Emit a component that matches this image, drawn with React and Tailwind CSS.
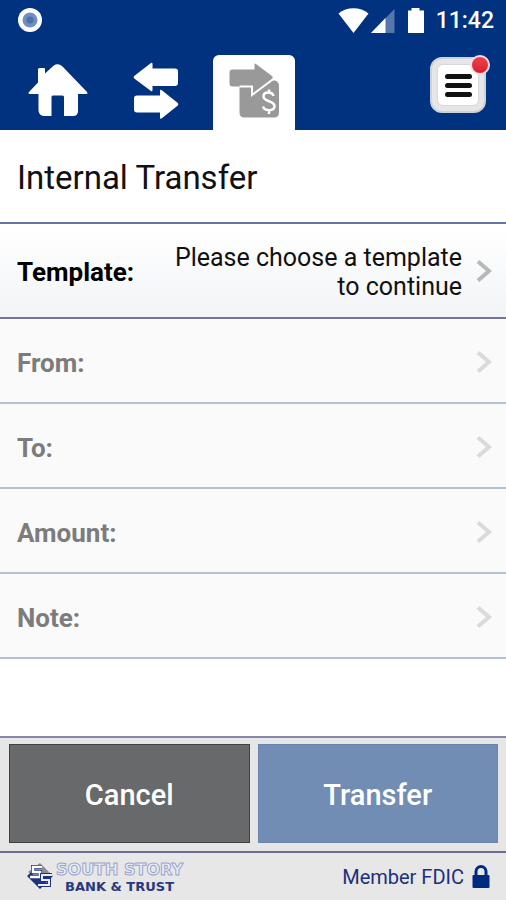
import React from "react";

function StatusBar() {
  return (
    <div className="flex h-10 items-center justify-between pr-3 pl-4">
      <svg className="h-7 w-7" viewBox="0 0 28 28" aria-hidden="true">
        <circle cx="14" cy="14" r="12" fill="#fff" />
        <circle cx="14" cy="14" r="7.500" fill="#6f8fc0" />
        <circle cx="14" cy="14" r="3.500" fill="#4a70ad" />
      </svg>
      <div className="flex items-center">
        <svg className="h-[26px] w-[94px]" viewBox="0 0 94 26" aria-hidden="true">
          <path d="M0.500 6.500C8.500-0.500 22.500-0.500 30.500 6.500L15.500 26Z" fill="#fff" />
          <path d="M56.500 2V26H33Z" fill="#5577ab" />
          <path d="M47.500 11V26H33Z" fill="#fff" />
          <path d="M73.500 1h8v2.500H86V26H70V3.500h3.500Z" fill="#fff" />
        </svg>
        <span className="ml-1 text-[23px] leading-none font-medium">11:42</span>
      </div>
    </div>
  );
}

function HomeIcon() {
  return (
    <svg className="h-[54px] w-[60px]" viewBox="0 0 60 54" aria-hidden="true">
      <path
        d="M10 5.500Q10 4 11.500 4H16Q17 4 17 5V9.500L25.500 1.800Q30 -1.500 34.500 2.500L59 28Q60.500 30 58 30H50V47Q50 52 45 52H36V33Q36 31.500 34.500 31.500H25Q23.500 31.500 23.500 33V52H16Q10.500 51.500 10.500 46V30H2Q-0.500 30 1 28L10 18.500Z"
        fill="#fff"
      />
    </svg>
  );
}

function ArrowsIcon() {
  return (
    <svg className="h-[58px] w-[46px]" viewBox="0 0 46 58" aria-hidden="true">
      <path
        d="M1.200 14L18 1Q19.500 0 19.500 2V6.500H42Q45 6.500 45 9V21Q45 24 42 24H19.500V28Q19.500 30 18 29L1.200 16.500Q0 15.300 1.200 14Z"
        fill="#fff"
      />
      <path
        d="M44.800 41L28.500 28Q27 27 27 29V33.500H4Q1 33.500 1 36.500V47.500Q1 50.500 4 50.500H27V55.500Q27 57.500 28.500 56.500L44.800 43.500Q46 42.300 44.800 41Z"
        fill="#fff"
      />
    </svg>
  );
}

function TransferIcon() {
  return (
    <svg className="h-14 w-[52px]" viewBox="0 0 52 56" aria-hidden="true">
      <path
        d="M11.500 22V49.500Q11.500 54.500 16.500 54.500H46Q51 54.500 51 49.500V23Q51 18.500 47 17.500H42L24 23Z"
        fill="#999"
      />
      <path
        d="M4.500 6.500H26.500V1.500Q26.500 0 28 1L44 13Q45.500 14.500 44 16L24 32V23.500H4.500Q1.500 23.500 1.500 20.500V9Q1.500 6.500 4.500 6.500Z"
        fill="#999"
      />
      <path d="M11.500 23.500H24V32L46 15.500" fill="none" stroke="#fff" strokeWidth="2" />
      <path
        d="M45.500 33C44.500 28.500 35.500 28 35.500 33.500C35.500 39 46.500 37.500 46.500 43C46.500 48.500 36.500 48.500 35 43.500M41 26.500V30.500M41 46.500V51"
        fill="none"
        stroke="#fff"
        strokeWidth="2.500"
      />
    </svg>
  );
}

function NavBar() {
  return (
    <nav className="flex h-[90px] items-end pr-[20px] pl-[17px]">
      <div className="flex gap-4">
        <button aria-label="Home" className="flex h-[75px] w-[82px] items-center justify-center pb-1">
          <HomeIcon />
        </button>
        <button aria-label="Transfers" className="flex h-[75px] w-[82px] items-center justify-center pb-1">
          <ArrowsIcon />
        </button>
        <button
          aria-label="Internal transfer"
          aria-current="page"
          className="flex h-[75px] w-[82px] items-center justify-center rounded-t-md bg-white pb-1"
        >
          <TransferIcon />
        </button>
      </div>
      <button
        aria-label="Menu"
        className="relative mb-[17px] ml-auto h-14 w-14 rounded-xl border-2 border-[#ced2da] bg-[#e6e6e6] p-[5px]"
      >
        <span className="flex h-full w-full flex-col items-center justify-center gap-1 rounded-md border border-[#d8d8d8] bg-white">
          <span className="h-[5px] w-[27px] rounded-full bg-[#111]" />
          <span className="h-[5px] w-[27px] rounded-full bg-[#111]" />
          <span className="h-[5px] w-[27px] rounded-full bg-[#111]" />
        </span>
        <span className="absolute -top-1 -right-1.5 h-5 w-5 rounded-full border-2 border-[#f3dfe4] bg-linear-to-b from-[#f0404c] to-[#d91f2c]" />
      </button>
    </nav>
  );
}

function Chevron({ className }) {
  return (
    <svg className={"h-6 w-4 shrink-0 " + className} viewBox="0 0 16 24" aria-hidden="true">
      <path d="M2 1.500L13 11L2 20.500" fill="none" stroke="currentColor" strokeWidth="4" />
    </svg>
  );
}

function FieldRow({ label }) {
  return (
    <button
      disabled
      className="flex h-[85px] w-full items-center justify-between border-b-2 border-[#b4c0d6] bg-[#fafafa] pt-1 pr-[14px] pl-[17px] text-left"
    >
      <span className="text-[26px] leading-[30px] font-bold text-[#7c7c7c]">{label}</span>
      <Chevron className="text-[#dadada]" />
    </button>
  );
}

function BankLogo() {
  return (
    <div className="flex items-center gap-0.5">
      <svg className="h-7 w-7" viewBox="0 0 28 28" aria-hidden="true">
        <path d="M14 0L27 13H9L2 9Z" fill="#8b8d92" />
        <path d="M1 13L7 7V13H27L14 26Z" fill="#1d3380" />
        <path d="M16 4H7V9H14V14H4" fill="none" stroke="#1d3380" strokeWidth="4" />
        <path d="M16 4H7V9H14V14H4" fill="none" stroke="#fff" strokeWidth="2.500" />
        <path d="M26 12H16V17H23V22H12" fill="none" stroke="#1d3380" strokeWidth="4" />
        <path d="M26 12H16V17H23V22H12" fill="none" stroke="#e8ebf4" strokeWidth="2" />
      </svg>
      <div className="flex flex-col items-center font-['DejaVu_Sans','Liberation_Sans',sans-serif] font-bold">
        <span className="text-[16px] leading-[19px] text-[#eef0f6] [-webkit-text-stroke:1px_#98a4cc]">SOUTH STORY</span>
        <span className="text-[13px] leading-[15px] text-[#26397f]">BANK &amp; TRUST</span>
      </div>
    </div>
  );
}

export default function App() {
  return (
    <div className="flex min-h-screen flex-col bg-white font-[Roboto,'Liberation_Sans',sans-serif] text-black">
      <header className="bg-[#00327f] text-white">
        <StatusBar />
        <NavBar />
      </header>
      <main className="flex grow flex-col">
        <h1 className="flex h-[94px] items-center border-b-2 border-[#6674a3] px-[17px] pt-1 text-[33px] text-[#111]">
          Internal Transfer
        </h1>
        <button className="flex h-[95px] w-full items-center border-b-2 border-[#73739e] bg-linear-to-b from-white to-[#f2f4f6] pt-0.5 pr-[14px] pl-[17px]">
          <span className="text-[26px] leading-[30px] font-bold">Template:</span>
          <span className="ml-auto w-[300px] text-right text-[25px] leading-[29px] text-[#111]">
            Please choose a template to continue
          </span>
          <Chevron className="ml-[14px] text-[#b8b8b8]" />
        </button>
        <FieldRow label="From:" />
        <FieldRow label="To:" />
        <FieldRow label="Amount:" />
        <FieldRow label="Note:" />
      </main>
      <div className="flex h-[117px] gap-2 border-y-2 border-t-[#8688ab] border-b-[#6b6d95] bg-[#e6e6e6] pt-1.5 pr-2 pb-2 pl-[9px]">
        <button className="flex-1 border border-[#3f4142] bg-[#67696b] pt-1 text-[29px] font-medium text-white">
          Cancel
        </button>
        <button className="flex-1 border border-[#6785af] bg-[#728db4] pt-1 text-[29px] font-medium text-white">
          Transfer
        </button>
      </div>
      <footer className="flex h-[47px] items-center justify-between bg-[#e7e7e7] pr-4 pl-[26px]">
        <BankLogo />
        <div className="flex items-center gap-2 text-xl text-[#1d2f7d]">
          <span>Member FDIC</span>
          <svg className="h-6 w-[18px]" viewBox="0 0 18 24" aria-hidden="true">
            <path d="M4 11V6.500a5 5 0 0 1 10 0V11" fill="none" stroke="#002a80" strokeWidth="3" />
            <rect x="0.500" y="10" width="17" height="13" rx="1" fill="#002a80" />
          </svg>
        </div>
      </footer>
    </div>
  );
}
